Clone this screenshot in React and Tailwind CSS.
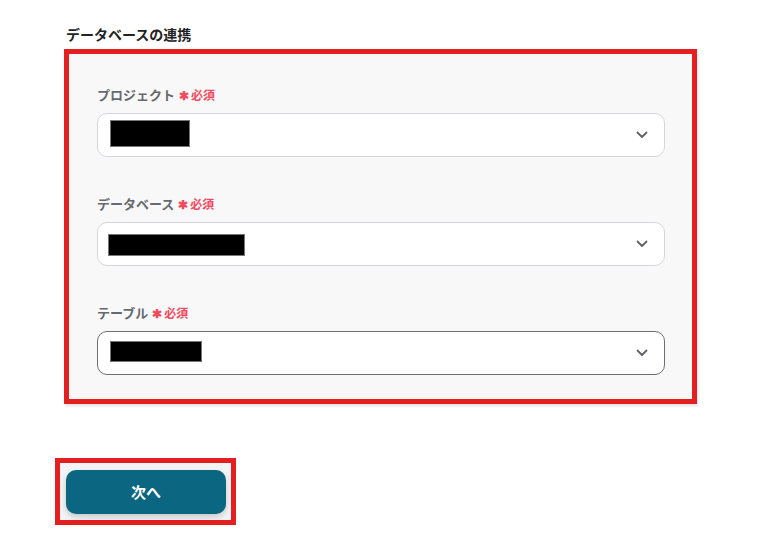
import React from "react";

const font = { fontFamily: '"Noto Sans CJK JP", "Noto Sans", sans-serif' };

function Chevron() {
  return (
    <svg width="12" height="8" viewBox="0 0 12 8" className="shrink-0">
      <path d="M1.5 1.5 L6 6 L10.5 1.5" fill="none" stroke="#5f6368" strokeWidth="1.8" strokeLinecap="round" strokeLinejoin="round" />
    </svg>
  );
}

function Field({ label, barW, barH, barL, barDy, dark, mt }) {
  return (
    <div className={mt}>
      <div className="flex items-center h-[18px] mb-[9px]">
        <span className="text-[13px] font-bold text-[#666a70] leading-[18px]">{label}</span>
        <span className="ml-[4px] text-[12px] font-bold text-[#f04a5f] leading-[18px]">✱</span>
        <span className="ml-[2px] text-[12px] font-bold text-[#f04a5f] leading-[18px]">必須</span>
      </div>
      <div
        className={`h-[44px] w-[568px] rounded-[10px] bg-white flex items-center justify-between pr-[16px] border ${dark ? "border-[#6e6e6e]" : "border-[#d3d6dd]"}`}
      >
        <div className="bg-black border border-[#777]" style={{ width: barW, height: barH, marginLeft: barL, marginTop: barDy }} />
        <Chevron />
      </div>
    </div>
  );
}

export default function App() {
  return (
    <div className="w-[766px] h-[540px] bg-white relative overflow-hidden" style={font}>
      <div className="pl-[64px] pt-[24px]">
        <div className="ml-[2px] text-[14px] font-bold text-[#222] leading-[20px]">データベースの連携</div>
        <div className="mt-[5px] w-[633px] border-[5px] border-[#e41f1f] bg-[#f8f8f8] pt-[32px] pb-[24px] pl-[28px] shadow-[1px_2px_3px_rgba(0,0,0,0.12)]">
          <Field label="プロジェクト" barW={80} barH={27} barL={12} barDy={-3} />
          <Field label="データベース" barW={137} barH={22} barL={10} barDy={2} mt="mt-[38px]" />
          <Field label="テーブル" barW={92} barH={21} barL={12} barDy={-3} dark mt="mt-[38px]" />
        </div>
        <div className="mt-[54px] -ml-[9px] w-[181px] h-[67px] border-[5px] border-[#e41f1f] bg-[#f3f4f5] flex items-start pt-[7px] pl-[6px]">
          <button className="w-[160px] h-[44px] rounded-[10px] bg-[#0b6781] text-white text-[15px] font-bold shadow-[0_3px_6px_rgba(0,0,0,0.18)]">
            次へ
          </button>
        </div>
      </div>
    </div>
  );
}
